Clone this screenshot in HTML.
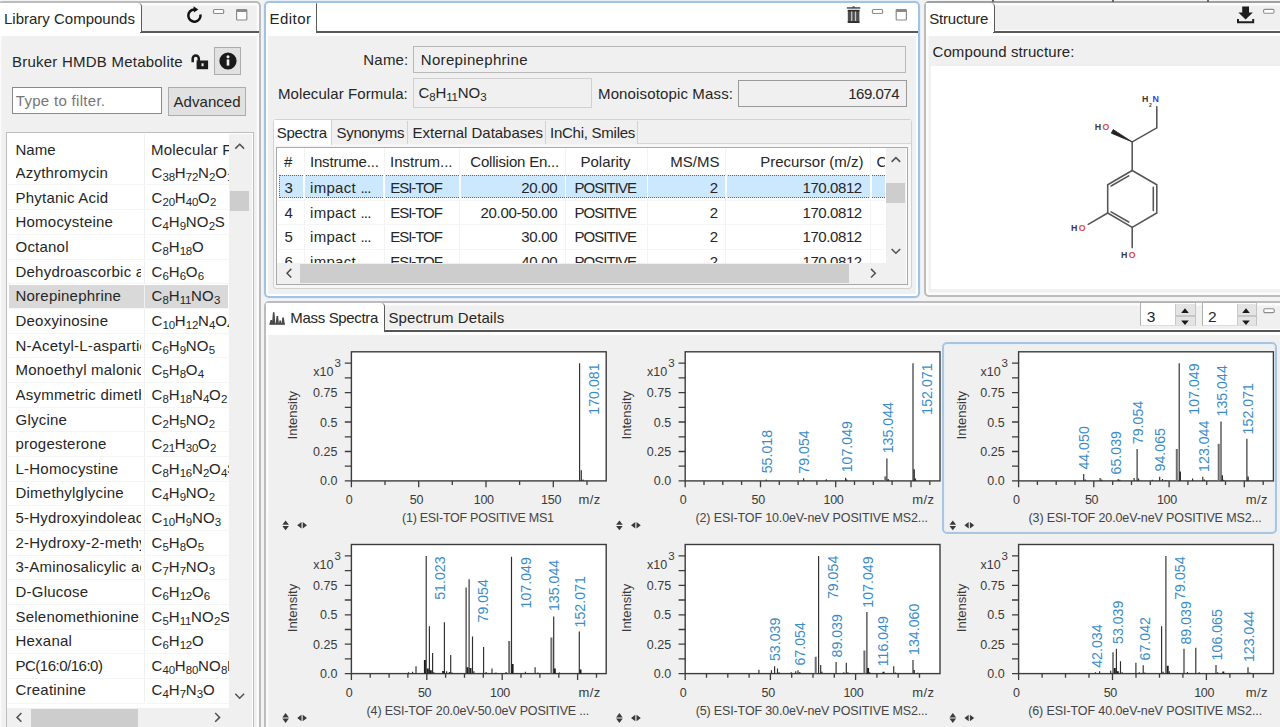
<!DOCTYPE html>
<html lang="en"><head><meta charset="utf-8"><title>Library Editor</title>
<style>
*{box-sizing:border-box;margin:0;padding:0}
html,body{width:1280px;height:727px;overflow:hidden;background:#f3f3f3}
body{position:relative;font-family:"Liberation Sans",sans-serif;font-size:15px;color:#262626;line-height:1}
.a{position:absolute}
.t{position:absolute;white-space:nowrap;line-height:18px;height:18px}
.s{font-size:11.5px;position:relative;top:3px;letter-spacing:-0.3px}
svg{position:absolute;overflow:visible}
svg text{font-family:"Liberation Sans",sans-serif}
</style></head>
<body>
<!-- left -->
<div class="a" style="left:-3px;top:0.8px;width:264.2px;height:740px;border:2.1px solid #bcbcbc;border-radius:5px;background:#f0f0f0;box-shadow:inset 0 0 0 2.4px #fbfbfb"></div>
<div class="a" style="left:0px;top:30.5px;width:259.1px;height:2px;background:#5a5a5a"></div>
<div class="a" style="left:0px;top:32.5px;width:259.1px;height:3px;background:#fff"></div>
<div class="a" style="left:-2px;top:2.5px;width:143.5px;height:29.6px;background:#fff;border-right:1.6px solid #5a5a5a;border-top-right-radius:4px"></div>
<div class="a" style="left:-2px;top:30.5px;width:141.9px;height:5px;background:#fff"></div>
<div class="t" style="left:4px;top:9.5px;">Library Compounds</div>
<svg style="left:184px;top:4px" width="70" height="24" viewBox="0 0 70 24"><path d="M16.4 10.4 A6.1 6.1 0 1 1 10.4 5.5" fill="none" stroke="#111" stroke-width="2.5"/><path d="M9.5 2.3 L14.3 5.5 L9.9 8.4 Z" fill="#111"/><rect x="29.5" y="5.5" width="10.2" height="4" rx="1.3" fill="#fff" stroke="#8a8a8a" stroke-width="1.2"/><rect x="52.6" y="5.6" width="10.2" height="10.4" rx="0.8" fill="#fff" stroke="#8a8a8a" stroke-width="1.2"/><rect x="52.6" y="5.6" width="10.2" height="2.4" fill="#8a8a8a"/></svg>
<div class="t" style="left:12px;top:52.5px;letter-spacing:0.23px">Bruker HMDB Metabolite</div>
<svg style="left:190px;top:53px" width="20" height="17" viewBox="0 0 20 17"><path d="M2.7 9.2 V5.5 A3.05 3.05 0 0 1 8.8 5.5 V8.6" fill="none" stroke="#1c1c1c" stroke-width="2.5"/><rect x="6.6" y="7.5" width="11.5" height="8.7" fill="#1c1c1c"/><rect x="11.5" y="10.3" width="2.1" height="2.9" fill="#e8e8e8"/></svg>
<div class="a" style="left:214px;top:47px;width:27px;height:27.5px;background:#e1e1e1;border:1px solid #adadad"></div>
<svg style="left:218.6px;top:52.2px" width="18" height="18" viewBox="0 0 18 18"><circle cx="9" cy="9" r="8.6" fill="#1a1a1a"/><rect x="7.7" y="7.4" width="2.6" height="6.2" fill="#f0f0f0"/><circle cx="9" cy="4.7" r="1.5" fill="#f0f0f0"/></svg>
<div class="a" style="left:11.5px;top:86.5px;width:150.5px;height:27px;background:#fff;border:1.4px solid #8a8a8a"></div>
<div class="t" style="left:15.8px;top:91.5px;color:#767676;letter-spacing:0.3px">Type to filter.</div>
<div class="a" style="left:168px;top:87.4px;width:78px;height:28.9px;background:#e1e1e1;border:1px solid #adadad"></div>
<div class="t" style="left:173.5px;top:93px;letter-spacing:0.05px">Advanced</div>
<div class="a" style="left:6px;top:132.3px;width:247.5px;height:600.7px;background:#fff;border:1.3px solid #bdbdbd"></div>
<div class="a" style="left:228.6px;top:133.6px;width:23.6px;height:574.7px;background:#f0f0f0"></div>
<div class="a" style="left:7.3px;top:708.3px;width:245px;height:20px;background:#f0f0f0"></div>
<div class="a" style="left:144px;top:133.6px;width:1px;height:569.7px;background:#f0f0f0"></div>
<div class="t" style="left:15.5px;top:140.5px;">Name</div>
<div class="t" style="left:151px;top:140.5px;width:77.5px;overflow:hidden;letter-spacing:0.2px">Molecular Formula</div>
<div class="a" style="left:8.3px;top:184.48px;width:221px;height:1px;background:#f5f5f5"></div>
<div class="t" style="left:15.5px;top:164.2px;width:125px;overflow:hidden;letter-spacing:0.22px">Azythromycin</div>
<div class="t" style="left:151.5px;top:164.2px;width:77px;overflow:hidden;letter-spacing:0.2px">C<span class="s">38</span>H<span class="s">72</span>N<span class="s">2</span>O<span class="s">12</span></div>
<div class="a" style="left:8.3px;top:209.16px;width:221px;height:1px;background:#f5f5f5"></div>
<div class="t" style="left:15.5px;top:188.83px;width:125px;overflow:hidden;letter-spacing:0.22px">Phytanic Acid</div>
<div class="t" style="left:151.5px;top:188.83px;width:77px;overflow:hidden;letter-spacing:0.2px">C<span class="s">20</span>H<span class="s">40</span>O<span class="s">2</span></div>
<div class="a" style="left:8.3px;top:233.84px;width:221px;height:1px;background:#f5f5f5"></div>
<div class="t" style="left:15.5px;top:213.46px;width:125px;overflow:hidden;letter-spacing:0.22px">Homocysteine</div>
<div class="t" style="left:151.5px;top:213.46px;width:77px;overflow:hidden;letter-spacing:0.2px">C<span class="s">4</span>H<span class="s">9</span>NO<span class="s">2</span>S</div>
<div class="a" style="left:8.3px;top:258.52px;width:221px;height:1px;background:#f5f5f5"></div>
<div class="t" style="left:15.5px;top:238.09px;width:125px;overflow:hidden;letter-spacing:0.22px">Octanol</div>
<div class="t" style="left:151.5px;top:238.09px;width:77px;overflow:hidden;letter-spacing:0.2px">C<span class="s">8</span>H<span class="s">18</span>O</div>
<div class="a" style="left:8.3px;top:283.2px;width:221px;height:1px;background:#f5f5f5"></div>
<div class="t" style="left:15.5px;top:262.72px;width:125px;overflow:hidden;letter-spacing:0.22px">Dehydroascorbic acid</div>
<div class="t" style="left:151.5px;top:262.72px;width:77px;overflow:hidden;letter-spacing:0.2px">C<span class="s">6</span>H<span class="s">6</span>O<span class="s">6</span></div>
<div class="a" style="left:9px;top:285.2px;width:135px;height:22.6px;background:#d9d9d9"></div>
<div class="a" style="left:145px;top:285.2px;width:83.4px;height:22.6px;background:#d9d9d9"></div>
<div class="a" style="left:8.3px;top:307.88px;width:221px;height:1px;background:#f5f5f5"></div>
<div class="t" style="left:15.5px;top:287.35px;width:125px;overflow:hidden;letter-spacing:0.22px">Norepinephrine</div>
<div class="t" style="left:151.5px;top:287.35px;width:77px;overflow:hidden;letter-spacing:0.2px">C<span class="s">8</span>H<span class="s">11</span>NO<span class="s">3</span></div>
<div class="a" style="left:8.3px;top:332.56px;width:221px;height:1px;background:#f5f5f5"></div>
<div class="t" style="left:15.5px;top:311.98px;width:125px;overflow:hidden;letter-spacing:0.22px">Deoxyinosine</div>
<div class="t" style="left:151.5px;top:311.98px;width:77px;overflow:hidden;letter-spacing:0.2px">C<span class="s">10</span>H<span class="s">12</span>N<span class="s">4</span>O<span class="s">4</span></div>
<div class="a" style="left:8.3px;top:357.24px;width:221px;height:1px;background:#f5f5f5"></div>
<div class="t" style="left:15.5px;top:336.61px;width:125px;overflow:hidden;letter-spacing:0.22px">N-Acetyl-L-aspartic acid</div>
<div class="t" style="left:151.5px;top:336.61px;width:77px;overflow:hidden;letter-spacing:0.2px">C<span class="s">6</span>H<span class="s">9</span>NO<span class="s">5</span></div>
<div class="a" style="left:8.3px;top:381.92px;width:221px;height:1px;background:#f5f5f5"></div>
<div class="t" style="left:15.5px;top:361.24px;width:125px;overflow:hidden;letter-spacing:0.22px">Monoethyl malonic acid</div>
<div class="t" style="left:151.5px;top:361.24px;width:77px;overflow:hidden;letter-spacing:0.2px">C<span class="s">5</span>H<span class="s">8</span>O<span class="s">4</span></div>
<div class="a" style="left:8.3px;top:406.6px;width:221px;height:1px;background:#f5f5f5"></div>
<div class="t" style="left:15.5px;top:385.87px;width:125px;overflow:hidden;letter-spacing:0.22px">Asymmetric dimethylarginine</div>
<div class="t" style="left:151.5px;top:385.87px;width:77px;overflow:hidden;letter-spacing:0.2px">C<span class="s">8</span>H<span class="s">18</span>N<span class="s">4</span>O<span class="s">2</span></div>
<div class="a" style="left:8.3px;top:431.28px;width:221px;height:1px;background:#f5f5f5"></div>
<div class="t" style="left:15.5px;top:410.5px;width:125px;overflow:hidden;letter-spacing:0.22px">Glycine</div>
<div class="t" style="left:151.5px;top:410.5px;width:77px;overflow:hidden;letter-spacing:0.2px">C<span class="s">2</span>H<span class="s">5</span>NO<span class="s">2</span></div>
<div class="a" style="left:8.3px;top:455.96px;width:221px;height:1px;background:#f5f5f5"></div>
<div class="t" style="left:15.5px;top:435.13px;width:125px;overflow:hidden;letter-spacing:0.22px">progesterone</div>
<div class="t" style="left:151.5px;top:435.13px;width:77px;overflow:hidden;letter-spacing:0.2px">C<span class="s">21</span>H<span class="s">30</span>O<span class="s">2</span></div>
<div class="a" style="left:8.3px;top:480.64px;width:221px;height:1px;background:#f5f5f5"></div>
<div class="t" style="left:15.5px;top:459.76px;width:125px;overflow:hidden;letter-spacing:0.22px">L-Homocystine</div>
<div class="t" style="left:151.5px;top:459.76px;width:77px;overflow:hidden;letter-spacing:0.2px">C<span class="s">8</span>H<span class="s">16</span>N<span class="s">2</span>O<span class="s">4</span>S<span class="s">2</span></div>
<div class="a" style="left:8.3px;top:505.32px;width:221px;height:1px;background:#f5f5f5"></div>
<div class="t" style="left:15.5px;top:484.39px;width:125px;overflow:hidden;letter-spacing:0.22px">Dimethylglycine</div>
<div class="t" style="left:151.5px;top:484.39px;width:77px;overflow:hidden;letter-spacing:0.2px">C<span class="s">4</span>H<span class="s">9</span>NO<span class="s">2</span></div>
<div class="a" style="left:8.3px;top:530px;width:221px;height:1px;background:#f5f5f5"></div>
<div class="t" style="left:15.5px;top:509.02px;width:125px;overflow:hidden;letter-spacing:0.22px">5-Hydroxyindoleacetic acid</div>
<div class="t" style="left:151.5px;top:509.02px;width:77px;overflow:hidden;letter-spacing:0.2px">C<span class="s">10</span>H<span class="s">9</span>NO<span class="s">3</span></div>
<div class="a" style="left:8.3px;top:554.68px;width:221px;height:1px;background:#f5f5f5"></div>
<div class="t" style="left:15.5px;top:533.65px;width:125px;overflow:hidden;letter-spacing:0.22px">2-Hydroxy-2-methylbutyric acid</div>
<div class="t" style="left:151.5px;top:533.65px;width:77px;overflow:hidden;letter-spacing:0.2px">C<span class="s">5</span>H<span class="s">8</span>O<span class="s">5</span></div>
<div class="a" style="left:8.3px;top:579.36px;width:221px;height:1px;background:#f5f5f5"></div>
<div class="t" style="left:15.5px;top:558.28px;width:125px;overflow:hidden;letter-spacing:0.22px">3-Aminosalicylic acid</div>
<div class="t" style="left:151.5px;top:558.28px;width:77px;overflow:hidden;letter-spacing:0.2px">C<span class="s">7</span>H<span class="s">7</span>NO<span class="s">3</span></div>
<div class="a" style="left:8.3px;top:604.04px;width:221px;height:1px;background:#f5f5f5"></div>
<div class="t" style="left:15.5px;top:582.91px;width:125px;overflow:hidden;letter-spacing:0.22px">D-Glucose</div>
<div class="t" style="left:151.5px;top:582.91px;width:77px;overflow:hidden;letter-spacing:0.2px">C<span class="s">6</span>H<span class="s">12</span>O<span class="s">6</span></div>
<div class="a" style="left:8.3px;top:628.72px;width:221px;height:1px;background:#f5f5f5"></div>
<div class="t" style="left:15.5px;top:607.54px;width:125px;overflow:hidden;letter-spacing:0.22px">Selenomethionine</div>
<div class="t" style="left:151.5px;top:607.54px;width:77px;overflow:hidden;letter-spacing:0.2px">C<span class="s">5</span>H<span class="s">11</span>NO<span class="s">2</span>Se</div>
<div class="a" style="left:8.3px;top:653.4px;width:221px;height:1px;background:#f5f5f5"></div>
<div class="t" style="left:15.5px;top:632.17px;width:125px;overflow:hidden;letter-spacing:0.22px">Hexanal</div>
<div class="t" style="left:151.5px;top:632.17px;width:77px;overflow:hidden;letter-spacing:0.2px">C<span class="s">6</span>H<span class="s">12</span>O</div>
<div class="a" style="left:8.3px;top:678.08px;width:221px;height:1px;background:#f5f5f5"></div>
<div class="t" style="left:15.5px;top:656.8px;width:125px;overflow:hidden;letter-spacing:-0.5px">PC(16:0/16:0)</div>
<div class="t" style="left:151.5px;top:656.8px;width:77px;overflow:hidden;letter-spacing:0.2px">C<span class="s">40</span>H<span class="s">80</span>NO<span class="s">8</span>P</div>
<div class="a" style="left:8.3px;top:702.76px;width:221px;height:1px;background:#f5f5f5"></div>
<div class="t" style="left:15.5px;top:681.43px;width:125px;overflow:hidden;letter-spacing:0.22px">Creatinine</div>
<div class="t" style="left:151.5px;top:681.43px;width:77px;overflow:hidden;letter-spacing:0.2px">C<span class="s">4</span>H<span class="s">7</span>N<span class="s">3</span>O</div>
<div class="a" style="left:230.3px;top:190.5px;width:18.5px;height:20.5px;background:#cdcdcd"></div>
<div class="a" style="left:30.5px;top:709px;width:107.5px;height:20px;background:#cdcdcd"></div>
<svg style="left:0;top:0" width="260" height="727" viewBox="0 0 260 727"><path d="M235.3 148.6 L239.7 144.2 L244.1 148.6" fill="none" stroke="#505050" stroke-width="1.5"/><path d="M235.3 693.8 L239.7 698.2 L244.1 693.8" fill="none" stroke="#505050" stroke-width="1.5"/><path d="M21.4 713 L17 717.4 L21.4 721.8" fill="none" stroke="#505050" stroke-width="1.5"/><path d="M215.2 713 L219.6 717.4 L215.2 721.8" fill="none" stroke="#505050" stroke-width="1.5"/></svg>
<!-- editor -->
<div class="a" style="left:264px;top:0.7px;width:656.4px;height:297.3px;border:2.1px solid #a2c3e1;border-radius:5px;background:#fff;box-shadow:0 0 0 1px #e6eff8"></div>
<div class="a" style="left:268.4px;top:35.5px;width:647.6px;height:258px;background:#f0f0f0"></div>
<div class="a" style="left:316px;top:30.6px;width:602.3px;height:2px;background:#5a5a5a"></div>
<div class="a" style="left:315.5px;top:3.2px;width:1.6px;height:29.3px;background:#5a5a5a;border-top-right-radius:3px"></div>
<div class="t" style="left:269.5px;top:9.5px;letter-spacing:0.45px">Editor</div>
<svg style="left:845px;top:4px" width="66" height="22" viewBox="0 0 66 22"><rect x="1.9" y="3.3" width="13.4" height="1.3" fill="#333"/><path d="M6.9 3.4 Q8.6 1.2 10.3 3.4 Z" fill="#333"/><rect x="2.8" y="5.9" width="11.6" height="13" fill="#4e4e4e"/><rect x="2.8" y="5.9" width="11.6" height="1.6" fill="#2c2c2c"/><rect x="2.8" y="17.2" width="11.6" height="1.7" fill="#2c2c2c"/><path d="M6.7 7.6 V17.1 M10.5 7.6 V17.1" stroke="#c6c6c6" stroke-width="1.3"/><rect x="27.4" y="5.5" width="10.2" height="4" rx="1.3" fill="#fff" stroke="#8a8a8a" stroke-width="1.2"/><rect x="51.2" y="5.6" width="10.2" height="10.4" rx="0.8" fill="#fff" stroke="#8a8a8a" stroke-width="1.2"/><rect x="51.2" y="5.6" width="10.2" height="2.4" fill="#8a8a8a"/></svg>
<div class="t" style="right:871.5px;top:51px;letter-spacing:0.2px">Name:</div>
<div class="a" style="left:413px;top:45.5px;width:493px;height:27px;background:#f0f0f0;border:1.5px solid #b8b8b8"></div>
<div class="t" style="left:420.8px;top:51px;letter-spacing:0.32px">Norepinephrine</div>
<div class="t" style="left:278px;top:85px;letter-spacing:0.08px">Molecular Formula:</div>
<div class="a" style="left:413px;top:78px;width:178.5px;height:30px;background:#f0f0f0;border:1.4px solid #d0d0d0"></div>
<div class="t" style="left:418.5px;top:84px;">C<span class="s">8</span>H<span class="s">11</span>NO<span class="s">3</span></div>
<div class="t" style="left:598px;top:85px;letter-spacing:0.14px">Monoisotopic Mass:</div>
<div class="a" style="left:738px;top:79.5px;width:168.5px;height:27px;background:#f0f0f0;border:1.4px solid #9a9a9a"></div>
<div class="t" style="right:381px;top:85px;letter-spacing:-0.5px">169.074</div>
<div class="a" style="left:272.5px;top:118.5px;width:639.5px;height:170.5px;border:1.2px solid #d2d2d2;background:#f7f7f7;border-radius:3px"></div>
<div class="a" style="left:273.5px;top:119.5px;width:637.5px;height:24.5px;background:#f0f0f0;border-bottom:1.2px solid #d6d6d6"></div>
<div class="a" style="left:273.5px;top:119.5px;width:58px;height:25.5px;background:#fff;border-right:1.2px solid #d2d2d2"></div>
<div class="t" style="left:276.7px;top:123.5px;letter-spacing:-0.22px">Spectra</div>
<div class="a" style="left:331.5px;top:120.5px;width:76px;height:23.5px;background:#f0f0f0;border-right:1.2px solid #d2d2d2"></div>
<div class="t" style="left:336.5px;top:123.5px;letter-spacing:-0.3px">Synonyms</div>
<div class="a" style="left:407.5px;top:120.5px;width:138.5px;height:23.5px;background:#f0f0f0;border-right:1.2px solid #d2d2d2"></div>
<div class="t" style="left:412.6px;top:123.5px;letter-spacing:-0.03px">External Databases</div>
<div class="a" style="left:546px;top:120.5px;width:92px;height:23.5px;background:#f0f0f0;border-right:1.2px solid #d2d2d2"></div>
<div class="t" style="left:550px;top:123.5px;letter-spacing:-0.25px">InChi, Smiles</div>
<div class="a" style="left:276px;top:146.5px;width:631.5px;height:138.4px;background:#fff;border:1.2px solid #a9a9a9"></div>
<div class="a" style="left:303.5px;top:148px;width:1px;height:115px;background:#f3f3f3"></div>
<div class="a" style="left:383.5px;top:148px;width:1px;height:115px;background:#f3f3f3"></div>
<div class="a" style="left:459.3px;top:148px;width:1px;height:115px;background:#f3f3f3"></div>
<div class="a" style="left:565px;top:148px;width:1px;height:115px;background:#f3f3f3"></div>
<div class="a" style="left:647px;top:148px;width:1px;height:115px;background:#f3f3f3"></div>
<div class="a" style="left:725.4px;top:148px;width:1px;height:115px;background:#f3f3f3"></div>
<div class="a" style="left:870.4px;top:148px;width:1px;height:115px;background:#f3f3f3"></div>
<div class="t" style="left:284px;top:152.5px;">#</div>
<div class="t" style="left:310px;top:152.5px;letter-spacing:-0.2px">Instrume...</div>
<div class="t" style="left:390px;top:152.5px;">Instrum...</div>
<div class="t" style="right:721px;top:152.5px;letter-spacing:-0.2px">Collision En...</div>
<div class="t" style="left:580.5px;top:152.5px;">Polarity</div>
<div class="t" style="right:560.5px;top:152.5px;">MS/MS</div>
<div class="t" style="right:416.5px;top:152.5px;">Precursor (m/z)</div>
<div class="t" style="left:876.5px;top:152.5px;width:8.5px;overflow:hidden">C</div>
<div class="a" style="left:279px;top:175.3px;width:606px;height:22.4px;background:#cce8ff;border-top:1.2px dotted #4d6a86;border-bottom:1.2px dotted #4d6a86"></div>
<div class="a" style="left:279px;top:175.3px;width:1.2px;height:22.4px;border-left:1.2px dotted #4d6a86"></div>
<div class="a" style="left:303.1px;top:174.5px;width:1.8px;height:24px;background:#fafcff"></div>
<div class="a" style="left:383.1px;top:174.5px;width:1.8px;height:24px;background:#fafcff"></div>
<div class="a" style="left:458.9px;top:174.5px;width:1.8px;height:24px;background:#fafcff"></div>
<div class="a" style="left:564.6px;top:174.5px;width:1.8px;height:24px;background:#fafcff"></div>
<div class="a" style="left:646.6px;top:174.5px;width:1.8px;height:24px;background:#fafcff"></div>
<div class="a" style="left:725px;top:174.5px;width:1.8px;height:24px;background:#fafcff"></div>
<div class="a" style="left:870px;top:174.5px;width:1.8px;height:24px;background:#fafcff"></div>
<div class="t" style="left:284.5px;top:178.5px;">3</div>
<div class="t" style="left:310px;top:178.5px;letter-spacing:0.3px">impact <span style="letter-spacing:-0.8px">...</span></div>
<div class="t" style="left:390.3px;top:178.5px;letter-spacing:-1.05px">ESI-TOF</div>
<div class="t" style="right:722.7px;top:178.5px;letter-spacing:-0.3px">20.00</div>
<div class="t" style="left:574.5px;top:178.5px;letter-spacing:-0.95px">POSITIVE</div>
<div class="t" style="right:562px;top:178.5px;">2</div>
<div class="t" style="right:418.2px;top:178.5px;letter-spacing:-0.4px">170.0812</div>
<div class="a" style="left:278px;top:199.5px;width:607px;height:1px;background:#f5f5f5"></div>
<div class="t" style="left:284.5px;top:203.5px;">4</div>
<div class="t" style="left:310px;top:203.5px;letter-spacing:0.3px">impact <span style="letter-spacing:-0.8px">...</span></div>
<div class="t" style="left:390.3px;top:203.5px;letter-spacing:-1.05px">ESI-TOF</div>
<div class="t" style="right:722.7px;top:203.5px;letter-spacing:-0.3px">20.00-50.00</div>
<div class="t" style="left:574.5px;top:203.5px;letter-spacing:-0.95px">POSITIVE</div>
<div class="t" style="right:562px;top:203.5px;">2</div>
<div class="t" style="right:418.2px;top:203.5px;letter-spacing:-0.4px">170.0812</div>
<div class="a" style="left:278px;top:224px;width:607px;height:1px;background:#f5f5f5"></div>
<div class="t" style="left:284.5px;top:228px;">5</div>
<div class="t" style="left:310px;top:228px;letter-spacing:0.3px">impact <span style="letter-spacing:-0.8px">...</span></div>
<div class="t" style="left:390.3px;top:228px;letter-spacing:-1.05px">ESI-TOF</div>
<div class="t" style="right:722.7px;top:228px;letter-spacing:-0.3px">30.00</div>
<div class="t" style="left:574.5px;top:228px;letter-spacing:-0.95px">POSITIVE</div>
<div class="t" style="right:562px;top:228px;">2</div>
<div class="t" style="right:418.2px;top:228px;letter-spacing:-0.4px">170.0812</div>
<div class="a" style="left:278px;top:249px;width:607px;height:1px;background:#f5f5f5"></div>
<div class="t" style="left:284.5px;top:253px;">6</div>
<div class="t" style="left:310px;top:253px;letter-spacing:0.3px">impact <span style="letter-spacing:-0.8px">...</span></div>
<div class="t" style="left:390.3px;top:253px;letter-spacing:-1.05px">ESI-TOF</div>
<div class="t" style="right:722.7px;top:253px;letter-spacing:-0.3px">40.00</div>
<div class="t" style="left:574.5px;top:253px;letter-spacing:-0.95px">POSITIVE</div>
<div class="t" style="right:562px;top:253px;">2</div>
<div class="t" style="right:418.2px;top:253px;letter-spacing:-0.4px">170.0812</div>
<div class="a" style="left:885.5px;top:147.7px;width:20.8px;height:115px;background:#f0f0f0"></div>
<div class="a" style="left:886.4px;top:182.5px;width:18.7px;height:20.4px;background:#cdcdcd"></div>
<div class="a" style="left:277.2px;top:262.7px;width:629.1px;height:21px;background:#f0f0f0"></div>
<div class="a" style="left:299.5px;top:263.5px;width:549px;height:19.5px;background:#cdcdcd"></div>
<svg style="left:0;top:0" width="1280" height="300" viewBox="0 0 1280 300"><path d="M891.6 161.9 L895.9 157.6 L900.2 161.9" fill="none" stroke="#505050" stroke-width="1.5"/><path d="M891.6 249 L895.9 253.3 L900.2 249" fill="none" stroke="#505050" stroke-width="1.5"/><path d="M291.3 268.9 L287 273.2 L291.3 277.5" fill="none" stroke="#505050" stroke-width="1.5"/><path d="M871 268.9 L875.3 273.2 L871 277.5" fill="none" stroke="#505050" stroke-width="1.5"/></svg>
<!-- structure -->
<div class="a" style="left:923.8px;top:1.1px;width:366px;height:296px;border:2.1px solid #bcbcbc;border-top-color:#a0a0a0;border-radius:5px;background:#f0f0f0;box-shadow:inset 0 0 0 2.4px #fbfbfb"></div>
<div class="a" style="left:925.9px;top:29.5px;width:356px;height:1px;background:#fff"></div>
<div class="a" style="left:925.9px;top:30.5px;width:356px;height:2px;background:#5a5a5a"></div>
<div class="a" style="left:925.9px;top:32.5px;width:356px;height:3px;background:#fff"></div>
<div class="a" style="left:925.9px;top:3.2px;width:69.1px;height:29px;background:#fff;border-right:1.6px solid #5a5a5a;border-top-right-radius:4px"></div>
<div class="a" style="left:925.9px;top:30.5px;width:67.5px;height:5px;background:#fff"></div>
<div class="a" style="left:991.5px;top:0px;width:2px;height:1.6px;background:#666"></div>
<div class="a" style="left:1111.8px;top:0px;width:2px;height:1.6px;background:#666"></div>
<div class="a" style="left:1206.8px;top:0px;width:2px;height:1.6px;background:#666"></div>
<div class="t" style="left:929.3px;top:9.5px;letter-spacing:-0.22px">Structure</div>
<svg style="left:1234px;top:4px" width="46" height="22" viewBox="0 0 46 22"><path d="M8.2 2.4 H15 V8.6 H18.8 L11.6 15.4 L4.4 8.6 H8.2 Z" fill="#1e1e1e"/><path d="M3 15 V19.2 H20.2 V15 H18.2 V17.2 H5 V15 Z" fill="#1e1e1e"/><rect x="29.6" y="5.4" width="10.4" height="3.8" rx="1.2" fill="#fff" stroke="#8c8c8c" stroke-width="1.1"/></svg>
<div class="t" style="left:932.5px;top:42.5px;letter-spacing:0.1px">Compound structure:</div>
<div class="a" style="left:930.5px;top:66.3px;width:352px;height:222.3px;background:#fff"></div>
<svg style="left:0;top:0" width="1280" height="300" viewBox="0 0 1280 300"><g fill="none" stroke="#555" stroke-width="1.55" stroke-linecap="round"><path d="M1156.8 106.8 V127.8 L1132.2 141.9 V170.5"/><path d="M1132.2 170.5 L1156.8 184.8 V213 L1132.2 227.3 L1107.7 213 V184.8 Z"/><path d="M1128.7 175.8 L1111.1 186 M1153.3 187.2 V210.6 M1111.1 211.8 L1128.7 222"/><path d="M1107.7 213 L1088.2 224.3 M1132.2 227.3 V247.6"/></g><path d="M1132.2 141.9 L1113.2 129.6 L1111.3 133.2 Z" fill="#222" stroke="#222" stroke-width="0.8" stroke-linejoin="round"/><g font-size="8.8" font-weight="bold" text-anchor="middle"><text x="1145.1" y="102" fill="#3a3a3a">H</text><text x="1150.3" y="106.6" font-size="5" fill="#3a3a3a">2</text><text x="1155.6" y="102" fill="#3b3be6">N</text><text x="1098" y="130.3" fill="#3a3a3a">H</text><text x="1105.9" y="130.3" fill="#e24545">O</text><text x="1074.2" y="230.7" fill="#3a3a3a">H</text><text x="1082.1" y="230.7" fill="#e24545">O</text><text x="1124.2" y="258" fill="#3a3a3a">H</text><text x="1132.1" y="258" fill="#e24545">O</text></g></svg>
<!-- spectra -->
<div class="a" style="left:264.2px;top:300.5px;width:1026px;height:440px;border:2.1px solid #bcbcbc;border-radius:5px;background:#f0f0f0;box-shadow:inset 0 0 0 2.4px #fbfbfb"></div>
<div class="a" style="left:266.3px;top:329.3px;width:1016px;height:1px;background:#fff"></div>
<div class="a" style="left:266.3px;top:330px;width:1016px;height:2px;background:#555"></div>
<div class="a" style="left:266.3px;top:332px;width:1016px;height:3.1px;background:#fff"></div>
<div class="a" style="left:266.3px;top:302.6px;width:118.6px;height:29.4px;background:#fff;border-right:1.6px solid #5a5a5a;border-top-right-radius:4px"></div>
<div class="a" style="left:266.3px;top:330px;width:117px;height:5.1px;background:#fff"></div>
<svg style="left:269px;top:311px" width="17" height="15" viewBox="0 0 17 15"><path d="M0.5 13.4L1.4 9.0L3.0 9.0L3.9 13.4ZM3.0 13.4L3.9 1.2L5.5 1.2L6.4 13.4ZM6.6 13.4L7.5 5.0L9.1 5.0L10.0 13.4ZM9.9 13.4L10.4 9.6L12.0 9.6L12.5 13.4ZM12.4 13.4L13.3 6.5L14.9 6.5L15.8 13.4Z" fill="#4a4a4a"/><path d="M0.6 13H16" stroke="#4a4a4a" stroke-width="1.3"/></svg>
<div class="t" style="left:290.3px;top:308.9px;letter-spacing:-0.33px">Mass Spectra</div>
<div class="t" style="left:388.5px;top:308.9px;letter-spacing:0.1px">Spectrum Details</div>
<div class="a" style="left:1140.3px;top:302.2px;width:55.6px;height:23.8px;background:#fff;border:1.5px solid #b0b0b0;border-bottom:1px solid #dcdcdc;border-right-color:#c4c4c4"></div>
<div class="a" style="left:1175.3px;top:303.5px;width:19.4px;height:21.2px;background:#e4e4e4;border-left:1px solid #c9c9c9"></div>
<div class="a" style="left:1175.3px;top:315.4px;width:19.4px;height:1.2px;background:#c6c6c6"></div>
<div class="t" style="left:1146.7px;top:308.2px;font-size:15.5px">3</div>
<svg style="left:1178.6px;top:305px" width="12" height="21" viewBox="0 0 12 21"><path d="M2.2 7.9L6 3.3L9.8 7.9ZM2.2 15.4L6 20L9.8 15.4Z" fill="#1a1a1a"/></svg>
<div class="a" style="left:1201.5px;top:302.2px;width:55.6px;height:23.8px;background:#fff;border:1.5px solid #b0b0b0;border-bottom:1px solid #dcdcdc;border-right-color:#c4c4c4"></div>
<div class="a" style="left:1236.5px;top:303.5px;width:19.4px;height:21.2px;background:#e4e4e4;border-left:1px solid #c9c9c9"></div>
<div class="a" style="left:1236.5px;top:315.4px;width:19.4px;height:1.2px;background:#c6c6c6"></div>
<div class="t" style="left:1207.9px;top:308.2px;font-size:15.5px">2</div>
<svg style="left:1239.8px;top:305px" width="12" height="21" viewBox="0 0 12 21"><path d="M2.2 7.9L6 3.3L9.8 7.9ZM2.2 15.4L6 20L9.8 15.4Z" fill="#1a1a1a"/></svg>
<svg style="left:1262px;top:306px" width="14" height="10" viewBox="0 0 14 10"><rect x="1.8" y="2.8" width="10.4" height="3.8" rx="1.2" fill="#fff" stroke="#8c8c8c" stroke-width="1.1"/></svg>
<div class="a" style="left:942px;top:342.1px;width:334.6px;height:192.2px;border:2px solid #a8c5e2;border-radius:5px;background:#f0f0f0;box-shadow:inset 0 0 0 1.2px #e6eff8"></div>
<svg style="left:0;top:0" width="1280" height="727" viewBox="0 0 1280 727">
<g><rect x="351.4" y="351.8" width="254.8" height="129.1" fill="#fff" stroke="#3c3c3c" stroke-width="1.4"/>
<path d="M344.8 363.2H351.4M344.8 377.9H351.4M344.8 392.6H351.4M344.8 407.3H351.4M344.8 422.0H351.4M344.8 436.8H351.4M344.8 451.5H351.4M344.8 466.2H351.4M344.8 480.9H351.4M351.4 480.9V487.3M385.0 480.9V485.1M418.7 480.9V487.3M452.3 480.9V485.1M486.0 480.9V487.3M519.6 480.9V485.1M553.3 480.9V487.3M587.0 480.9V485.1" stroke="#3c3c3c" stroke-width="1.3" fill="none"/>
<text x="337.4" y="397.1" font-size="12.5" fill="#3a3a3a" text-anchor="end">0.75</text>
<text x="337.4" y="426.5" font-size="12.5" fill="#3a3a3a" text-anchor="end">0.5</text>
<text x="337.4" y="456.0" font-size="12.5" fill="#3a3a3a" text-anchor="end">0.25</text>
<text x="337.4" y="485.4" font-size="12.5" fill="#3a3a3a" text-anchor="end">0.0</text>
<text x="333.4" y="376.4" font-size="12.5" fill="#3a3a3a" text-anchor="end">x10</text>
<text x="334.4" y="367.4" font-size="11.5" fill="#3a3a3a" text-anchor="start">3</text>
<text x="297.0" y="415.2" font-size="13" fill="#3a3a3a" text-anchor="middle" transform="rotate(-90 297.0 415.2)">Intensity</text>
<text x="349.2" y="504.4" font-size="12.5" fill="#3a3a3a" text-anchor="middle" letter-spacing="-0.3">0</text>
<text x="416.5" y="504.4" font-size="12.5" fill="#3a3a3a" text-anchor="middle" letter-spacing="-0.3">50</text>
<text x="483.8" y="504.4" font-size="12.5" fill="#3a3a3a" text-anchor="middle" letter-spacing="-0.3">100</text>
<text x="551.1" y="504.4" font-size="12.5" fill="#3a3a3a" text-anchor="middle" letter-spacing="-0.3">150</text>
<text x="589.6" y="504.4" font-size="13" fill="#3a3a3a" text-anchor="middle" letter-spacing="0.4">m/z</text>
<text x="477.9" y="522.1" font-size="12.5" fill="#444" text-anchor="middle" letter-spacing="-0.27">(1) ESI-TOF POSITIVE MS1</text>
<path d="M579.6 480.9V363.2M581.3 480.9V470.3M583.0 480.9V479.5" stroke="#2e2e2e" stroke-width="1.15" fill="none"/>
<text x="598.8" y="363.4" font-size="14.2" fill="#3a8cc9" text-anchor="end" transform="rotate(-90 598.8 363.4)">170.081</text>
<path d="M282.3 524.7l3.3 -4.3l3.3 4.3zM282.3 525.9l3.3 4.3l3.3 -4.3z" fill="#3a3a3a"/>
<path d="M301.5 522.0l-4.3 3.3l4.3 3.3zM302.7 522.0l4.3 3.3l-4.3 3.3z" fill="#3a3a3a"/></g>
<g><rect x="685.2" y="351.8" width="254.8" height="129.1" fill="#fff" stroke="#3c3c3c" stroke-width="1.4"/>
<path d="M678.6 363.2H685.2M678.6 377.9H685.2M678.6 392.6H685.2M678.6 407.3H685.2M678.6 422.0H685.2M678.6 436.8H685.2M678.6 451.5H685.2M678.6 466.2H685.2M678.6 480.9H685.2M685.2 480.9V487.3M704.0 480.9V485.1M722.8 480.9V485.1M741.6 480.9V485.1M760.5 480.9V487.3M779.3 480.9V485.1M798.1 480.9V485.1M816.9 480.9V485.1M835.7 480.9V487.3M854.5 480.9V485.1M873.3 480.9V485.1M892.1 480.9V485.1M911.0 480.9V487.3M929.8 480.9V485.1" stroke="#3c3c3c" stroke-width="1.3" fill="none"/>
<text x="671.2" y="397.1" font-size="12.5" fill="#3a3a3a" text-anchor="end">0.75</text>
<text x="671.2" y="426.5" font-size="12.5" fill="#3a3a3a" text-anchor="end">0.5</text>
<text x="671.2" y="456.0" font-size="12.5" fill="#3a3a3a" text-anchor="end">0.25</text>
<text x="671.2" y="485.4" font-size="12.5" fill="#3a3a3a" text-anchor="end">0.0</text>
<text x="667.2" y="376.4" font-size="12.5" fill="#3a3a3a" text-anchor="end">x10</text>
<text x="668.2" y="367.4" font-size="11.5" fill="#3a3a3a" text-anchor="start">3</text>
<text x="630.8" y="415.2" font-size="13" fill="#3a3a3a" text-anchor="middle" transform="rotate(-90 630.8 415.2)">Intensity</text>
<text x="683.0" y="504.4" font-size="12.5" fill="#3a3a3a" text-anchor="middle" letter-spacing="-0.3">0</text>
<text x="758.2" y="504.4" font-size="12.5" fill="#3a3a3a" text-anchor="middle" letter-spacing="-0.3">50</text>
<text x="833.5" y="504.4" font-size="12.5" fill="#3a3a3a" text-anchor="middle" letter-spacing="-0.3">100</text>
<text x="923.4" y="504.4" font-size="13" fill="#3a3a3a" text-anchor="middle" letter-spacing="0.4">m/z</text>
<text x="811.7" y="522.1" font-size="12.5" fill="#444" text-anchor="middle" letter-spacing="-0.13">(2) ESI-TOF 10.0eV-neV POSITIVE MS2...</text>
<path d="M885.3 480.9V476.4" stroke="#6e6e6e" stroke-width="2" fill="none"/>
<path d="M913.0 480.9V363.2M914.3 480.9V469.2M915.5 480.9V478.6M886.9 480.9V458.4M888.3 480.9V479.1M845.6 480.9V477.7M846.7 480.9V479.5M826.3 480.9V479.3M803.6 480.9V478.2M766.2 480.9V479.5" stroke="#2e2e2e" stroke-width="1.15" fill="none"/>
<text x="772.4" y="429.9" font-size="14.2" fill="#3a8cc9" text-anchor="end" transform="rotate(-90 772.4 429.9)">55.018</text>
<text x="809.2" y="430.3" font-size="14.2" fill="#3a8cc9" text-anchor="end" transform="rotate(-90 809.2 430.3)">79.054</text>
<text x="851.8" y="421.0" font-size="14.2" fill="#3a8cc9" text-anchor="end" transform="rotate(-90 851.8 421.0)">107.049</text>
<text x="892.7" y="402.0" font-size="14.2" fill="#3a8cc9" text-anchor="end" transform="rotate(-90 892.7 402.0)">135.044</text>
<text x="932.4" y="363.4" font-size="14.2" fill="#3a8cc9" text-anchor="end" transform="rotate(-90 932.4 363.4)">152.071</text>
<path d="M616.1 524.7l3.3 -4.3l3.3 4.3zM616.1 525.9l3.3 4.3l3.3 -4.3z" fill="#3a3a3a"/>
<path d="M635.3 522.0l-4.3 3.3l4.3 3.3zM636.5 522.0l4.3 3.3l-4.3 3.3z" fill="#3a3a3a"/></g>
<g><rect x="1018.6" y="351.8" width="254.8" height="129.1" fill="#fff" stroke="#3c3c3c" stroke-width="1.4"/>
<path d="M1012.0 363.2H1018.6M1012.0 377.9H1018.6M1012.0 392.6H1018.6M1012.0 407.3H1018.6M1012.0 422.0H1018.6M1012.0 436.8H1018.6M1012.0 451.5H1018.6M1012.0 466.2H1018.6M1012.0 480.9H1018.6M1018.6 480.9V487.3M1037.4 480.9V485.1M1056.2 480.9V485.1M1075.0 480.9V485.1M1093.8 480.9V487.3M1112.7 480.9V485.1M1131.5 480.9V485.1M1150.3 480.9V485.1M1169.1 480.9V487.3M1187.9 480.9V485.1M1206.7 480.9V485.1M1225.5 480.9V485.1M1244.3 480.9V487.3M1263.2 480.9V485.1" stroke="#3c3c3c" stroke-width="1.3" fill="none"/>
<text x="1004.6" y="397.1" font-size="12.5" fill="#3a3a3a" text-anchor="end">0.75</text>
<text x="1004.6" y="426.5" font-size="12.5" fill="#3a3a3a" text-anchor="end">0.5</text>
<text x="1004.6" y="456.0" font-size="12.5" fill="#3a3a3a" text-anchor="end">0.25</text>
<text x="1004.6" y="485.4" font-size="12.5" fill="#3a3a3a" text-anchor="end">0.0</text>
<text x="1000.6" y="376.4" font-size="12.5" fill="#3a3a3a" text-anchor="end">x10</text>
<text x="1001.6" y="367.4" font-size="11.5" fill="#3a3a3a" text-anchor="start">3</text>
<text x="966.4" y="415.2" font-size="13" fill="#3a3a3a" text-anchor="middle" transform="rotate(-90 966.4 415.2)">Intensity</text>
<text x="1016.4" y="504.4" font-size="12.5" fill="#3a3a3a" text-anchor="middle" letter-spacing="-0.3">0</text>
<text x="1091.6" y="504.4" font-size="12.5" fill="#3a3a3a" text-anchor="middle" letter-spacing="-0.3">50</text>
<text x="1166.9" y="504.4" font-size="12.5" fill="#3a3a3a" text-anchor="middle" letter-spacing="-0.3">100</text>
<text x="1256.8" y="504.4" font-size="13" fill="#3a3a3a" text-anchor="middle" letter-spacing="0.4">m/z</text>
<text x="1145.1" y="522.1" font-size="12.5" fill="#444" text-anchor="middle" letter-spacing="-0.11">(3) ESI-TOF 20.0eV-neV POSITIVE MS2...</text>
<path d="M1176.8 480.9V448.9M1218.7 480.9V443.7" stroke="#6e6e6e" stroke-width="2" fill="none"/>
<path d="M1083.7 480.9V474.1M1085.3 480.9V479.5M1100.1 480.9V478.0M1101.7 480.9V479.5M1118.2 480.9V478.9M1119.8 480.9V479.8M1134.1 480.9V478.0M1137.1 480.9V448.9M1138.6 480.9V478.6M1152.3 480.9V479.8M1159.7 480.9V476.8M1162.5 480.9V479.1M1165.9 480.9V480.0M1179.2 480.9V363.2M1180.4 480.9V471.4M1192.6 480.9V478.6M1202.8 480.9V476.8M1204.4 480.9V479.5M1221.0 480.9V421.6M1222.4 480.9V475.3M1223.7 480.9V479.8M1246.9 480.9V438.7M1248.2 480.9V476.4" stroke="#2e2e2e" stroke-width="1.15" fill="none"/>
<text x="1089.3" y="426.2" font-size="14.2" fill="#3a8cc9" text-anchor="end" transform="rotate(-90 1089.3 426.2)">44.050</text>
<text x="1121.1" y="431.0" font-size="14.2" fill="#3a8cc9" text-anchor="end" transform="rotate(-90 1121.1 431.0)">65.039</text>
<text x="1143.1" y="400.8" font-size="14.2" fill="#3a8cc9" text-anchor="end" transform="rotate(-90 1143.1 400.8)">79.054</text>
<text x="1165.3" y="428.0" font-size="14.2" fill="#3a8cc9" text-anchor="end" transform="rotate(-90 1165.3 428.0)">94.065</text>
<text x="1198.6" y="363.4" font-size="14.2" fill="#3a8cc9" text-anchor="end" transform="rotate(-90 1198.6 363.4)">107.049</text>
<text x="1208.8" y="420.6" font-size="14.2" fill="#3a8cc9" text-anchor="end" transform="rotate(-90 1208.8 420.6)">123.044</text>
<text x="1227.0" y="365.2" font-size="14.2" fill="#3a8cc9" text-anchor="end" transform="rotate(-90 1227.0 365.2)">135.044</text>
<text x="1252.6" y="383.1" font-size="14.2" fill="#3a8cc9" text-anchor="end" transform="rotate(-90 1252.6 383.1)">152.071</text>
<path d="M949.5 524.7l3.3 -4.3l3.3 4.3zM949.5 525.9l3.3 4.3l3.3 -4.3z" fill="#3a3a3a"/>
<path d="M968.7 522.0l-4.3 3.3l4.3 3.3zM969.9 522.0l4.3 3.3l-4.3 3.3z" fill="#3a3a3a"/></g>
<g><rect x="351.4" y="544.5" width="254.8" height="129.1" fill="#fff" stroke="#3c3c3c" stroke-width="1.4"/>
<path d="M344.8 555.9H351.4M344.8 570.6H351.4M344.8 585.3H351.4M344.8 600.0H351.4M344.8 614.8H351.4M344.8 629.5H351.4M344.8 644.2H351.4M344.8 658.9H351.4M344.8 673.6H351.4M351.4 673.6V680.0M370.2 673.6V677.8M389.1 673.6V677.8M407.9 673.6V677.8M426.8 673.6V680.0M445.6 673.6V677.8M464.5 673.6V677.8M483.3 673.6V677.8M502.2 673.6V680.0M521.0 673.6V677.8M539.9 673.6V677.8M558.8 673.6V677.8M577.6 673.6V680.0M596.5 673.6V677.8" stroke="#3c3c3c" stroke-width="1.3" fill="none"/>
<text x="337.4" y="589.8" font-size="12.5" fill="#3a3a3a" text-anchor="end">0.75</text>
<text x="337.4" y="619.2" font-size="12.5" fill="#3a3a3a" text-anchor="end">0.5</text>
<text x="337.4" y="648.7" font-size="12.5" fill="#3a3a3a" text-anchor="end">0.25</text>
<text x="337.4" y="678.1" font-size="12.5" fill="#3a3a3a" text-anchor="end">0.0</text>
<text x="333.4" y="569.1" font-size="12.5" fill="#3a3a3a" text-anchor="end">x10</text>
<text x="334.4" y="560.1" font-size="11.5" fill="#3a3a3a" text-anchor="start">3</text>
<text x="297.0" y="608.0" font-size="13" fill="#3a3a3a" text-anchor="middle" transform="rotate(-90 297.0 608.0)">Intensity</text>
<text x="349.2" y="697.1" font-size="12.5" fill="#3a3a3a" text-anchor="middle" letter-spacing="-0.3">0</text>
<text x="424.6" y="697.1" font-size="12.5" fill="#3a3a3a" text-anchor="middle" letter-spacing="-0.3">50</text>
<text x="500.0" y="697.1" font-size="12.5" fill="#3a3a3a" text-anchor="middle" letter-spacing="-0.3">100</text>
<text x="589.6" y="697.1" font-size="13" fill="#3a3a3a" text-anchor="middle" letter-spacing="0.4">m/z</text>
<text x="477.9" y="714.8" font-size="12.5" fill="#444" text-anchor="middle" letter-spacing="-0.17">(4) ESI-TOF 20.0eV-50.0eV POSITIVE ...</text>
<path d="M509.2 673.6V640.9M551.4 673.6V637.5" stroke="#6e6e6e" stroke-width="2" fill="none"/>
<path d="M408.5 673.6V672.2M412.6 673.6V671.8M416.0 673.6V666.2M426.2 673.6V555.9M429.4 673.6V626.2M432.6 673.6V652.9M433.9 673.6V672.2M444.4 673.6V622.2M446.6 673.6V671.3M450.7 673.6V654.9M449.4 673.6V672.0M452.1 673.6V672.5M466.1 673.6V587.5M469.1 673.6V579.3M472.5 673.6V636.4M473.9 673.6V671.3M483.6 673.6V647.0M486.1 673.6V672.0M492.0 673.6V668.4M495.9 673.6V672.5M506.1 673.6V672.0M511.5 673.6V556.8M525.4 673.6V671.8M535.1 673.6V667.3M537.8 673.6V672.5M553.7 673.6V616.6M559.4 673.6V672.5M579.3 673.6V631.4" stroke="#2e2e2e" stroke-width="1.15" fill="none"/>
<path d="M424.9 673.6V660.1M427.8 673.6V668.6M430.8 673.6V670.2M443.2 673.6V670.9M467.5 673.6V667.3M470.5 673.6V668.0M512.6 673.6V664.1M554.8 673.6V668.4M580.5 673.6V669.5" stroke="#1e1e1e" stroke-width="2" fill="none"/>
<text x="445.4" y="556.4" font-size="14.2" fill="#3a8cc9" text-anchor="end" transform="rotate(-90 445.4 556.4)">51.023</text>
<text x="488.5" y="579.1" font-size="14.2" fill="#3a8cc9" text-anchor="end" transform="rotate(-90 488.5 579.1)">79.054</text>
<text x="530.9" y="557.1" font-size="14.2" fill="#3a8cc9" text-anchor="end" transform="rotate(-90 530.9 557.1)">107.049</text>
<text x="558.8" y="559.8" font-size="14.2" fill="#3a8cc9" text-anchor="end" transform="rotate(-90 558.8 559.8)">135.044</text>
<text x="584.9" y="576.1" font-size="14.2" fill="#3a8cc9" text-anchor="end" transform="rotate(-90 584.9 576.1)">152.071</text>
<path d="M282.3 717.4l3.3 -4.3l3.3 4.3zM282.3 718.6l3.3 4.3l3.3 -4.3z" fill="#3a3a3a"/>
<path d="M301.5 714.7l-4.3 3.3l4.3 3.3zM302.7 714.7l4.3 3.3l-4.3 3.3z" fill="#3a3a3a"/></g>
<g><rect x="685.2" y="544.5" width="254.8" height="129.1" fill="#fff" stroke="#3c3c3c" stroke-width="1.4"/>
<path d="M678.6 555.9H685.2M678.6 570.6H685.2M678.6 585.3H685.2M678.6 600.0H685.2M678.6 614.8H685.2M678.6 629.5H685.2M678.6 644.2H685.2M678.6 658.9H685.2M678.6 673.6H685.2M685.2 673.6V680.0M706.5 673.6V677.8M727.8 673.6V677.8M749.1 673.6V677.8M770.4 673.6V680.0M791.7 673.6V677.8M813.0 673.6V677.8M834.3 673.6V677.8M855.6 673.6V680.0M876.9 673.6V677.8M898.2 673.6V677.8M919.5 673.6V677.8" stroke="#3c3c3c" stroke-width="1.3" fill="none"/>
<text x="671.2" y="589.8" font-size="12.5" fill="#3a3a3a" text-anchor="end">0.75</text>
<text x="671.2" y="619.2" font-size="12.5" fill="#3a3a3a" text-anchor="end">0.5</text>
<text x="671.2" y="648.7" font-size="12.5" fill="#3a3a3a" text-anchor="end">0.25</text>
<text x="671.2" y="678.1" font-size="12.5" fill="#3a3a3a" text-anchor="end">0.0</text>
<text x="667.2" y="569.1" font-size="12.5" fill="#3a3a3a" text-anchor="end">x10</text>
<text x="668.2" y="560.1" font-size="11.5" fill="#3a3a3a" text-anchor="start">3</text>
<text x="630.8" y="608.0" font-size="13" fill="#3a3a3a" text-anchor="middle" transform="rotate(-90 630.8 608.0)">Intensity</text>
<text x="683.0" y="697.1" font-size="12.5" fill="#3a3a3a" text-anchor="middle" letter-spacing="-0.3">0</text>
<text x="768.2" y="697.1" font-size="12.5" fill="#3a3a3a" text-anchor="middle" letter-spacing="-0.3">50</text>
<text x="853.4" y="697.1" font-size="12.5" fill="#3a3a3a" text-anchor="middle" letter-spacing="-0.3">100</text>
<text x="923.4" y="697.1" font-size="13" fill="#3a3a3a" text-anchor="middle" letter-spacing="0.4">m/z</text>
<text x="811.7" y="714.8" font-size="12.5" fill="#444" text-anchor="middle" letter-spacing="-0.14">(5) ESI-TOF 30.0eV-neV POSITIVE MS2...</text>
<path d="M815.7 673.6V656.7M864.4 673.6V650.6" stroke="#6e6e6e" stroke-width="2" fill="none"/>
<path d="M758.9 673.6V669.8M771.4 673.6V670.2M774.6 673.6V666.2M777.5 673.6V668.4M779.1 673.6V672.2M791.2 673.6V672.2M795.7 673.6V671.3M798.0 673.6V670.2M799.8 673.6V672.0M818.6 673.6V555.9M820.7 673.6V665.0M822.0 673.6V671.8M836.1 673.6V661.9M843.8 673.6V672.2M846.3 673.6V662.8M847.9 673.6V672.2M866.9 673.6V612.0M869.7 673.6V672.2M893.7 673.6V666.2M895.5 673.6V672.5M913.0 673.6V660.1M914.3 673.6V670.0M917.7 673.6V672.7" stroke="#2e2e2e" stroke-width="1.15" fill="none"/>
<path d="M868.1 673.6V668.0M883.5 673.6V671.8" stroke="#1e1e1e" stroke-width="2" fill="none"/>
<text x="779.9" y="617.6" font-size="14.2" fill="#3a8cc9" text-anchor="end" transform="rotate(-90 779.9 617.6)">53.039</text>
<text x="804.7" y="622.1" font-size="14.2" fill="#3a8cc9" text-anchor="end" transform="rotate(-90 804.7 622.1)">67.054</text>
<text x="837.6" y="555.7" font-size="14.2" fill="#3a8cc9" text-anchor="end" transform="rotate(-90 837.6 555.7)">79.054</text>
<text x="842.1" y="614.1" font-size="14.2" fill="#3a8cc9" text-anchor="end" transform="rotate(-90 842.1 614.1)">89.039</text>
<text x="873.4" y="556.4" font-size="14.2" fill="#3a8cc9" text-anchor="end" transform="rotate(-90 873.4 556.4)">107.049</text>
<text x="887.7" y="616.1" font-size="14.2" fill="#3a8cc9" text-anchor="end" transform="rotate(-90 887.7 616.1)">116.049</text>
<text x="919.2" y="603.6" font-size="14.2" fill="#3a8cc9" text-anchor="end" transform="rotate(-90 919.2 603.6)">134.060</text>
<path d="M616.1 717.4l3.3 -4.3l3.3 4.3zM616.1 718.6l3.3 4.3l3.3 -4.3z" fill="#3a3a3a"/>
<path d="M635.3 714.7l-4.3 3.3l4.3 3.3zM636.5 714.7l4.3 3.3l-4.3 3.3z" fill="#3a3a3a"/></g>
<g><rect x="1018.6" y="544.5" width="254.8" height="129.1" fill="#fff" stroke="#3c3c3c" stroke-width="1.4"/>
<path d="M1012.0 555.9H1018.6M1012.0 570.6H1018.6M1012.0 585.3H1018.6M1012.0 600.0H1018.6M1012.0 614.8H1018.6M1012.0 629.5H1018.6M1012.0 644.2H1018.6M1012.0 658.9H1018.6M1012.0 673.6H1018.6M1018.6 673.6V680.0M1042.1 673.6V677.8M1065.5 673.6V677.8M1089.0 673.6V677.8M1112.5 673.6V680.0M1136.0 673.6V677.8M1159.5 673.6V677.8M1182.9 673.6V677.8M1206.4 673.6V680.0M1229.9 673.6V677.8M1253.3 673.6V677.8" stroke="#3c3c3c" stroke-width="1.3" fill="none"/>
<text x="1004.6" y="589.8" font-size="12.5" fill="#3a3a3a" text-anchor="end">0.75</text>
<text x="1004.6" y="619.2" font-size="12.5" fill="#3a3a3a" text-anchor="end">0.5</text>
<text x="1004.6" y="648.7" font-size="12.5" fill="#3a3a3a" text-anchor="end">0.25</text>
<text x="1004.6" y="678.1" font-size="12.5" fill="#3a3a3a" text-anchor="end">0.0</text>
<text x="1000.6" y="569.1" font-size="12.5" fill="#3a3a3a" text-anchor="end">x10</text>
<text x="1001.6" y="560.1" font-size="11.5" fill="#3a3a3a" text-anchor="start">3</text>
<text x="966.4" y="608.0" font-size="13" fill="#3a3a3a" text-anchor="middle" transform="rotate(-90 966.4 608.0)">Intensity</text>
<text x="1016.4" y="697.1" font-size="12.5" fill="#3a3a3a" text-anchor="middle" letter-spacing="-0.3">0</text>
<text x="1110.3" y="697.1" font-size="12.5" fill="#3a3a3a" text-anchor="middle" letter-spacing="-0.3">50</text>
<text x="1204.2" y="697.1" font-size="12.5" fill="#3a3a3a" text-anchor="middle" letter-spacing="-0.3">100</text>
<text x="1256.8" y="697.1" font-size="13" fill="#3a3a3a" text-anchor="middle" letter-spacing="0.4">m/z</text>
<text x="1145.1" y="714.8" font-size="12.5" fill="#444" text-anchor="middle" letter-spacing="-0.09">(6) ESI-TOF 40.0eV-neV POSITIVE MS2...</text>
<path d="M1095.5 673.6V672.2M1099.6 673.6V671.3M1110.7 673.6V670.7M1113.0 673.6V652.2M1116.4 673.6V648.8M1120.5 673.6V661.2M1122.1 673.6V672.2M1135.9 673.6V662.8M1139.3 673.6V672.2M1143.2 673.6V665.3M1144.8 673.6V672.5M1161.6 673.6V626.2M1163.1 673.6V671.8M1165.9 673.6V555.9M1169.3 673.6V671.3M1184.0 673.6V648.8M1187.4 673.6V672.0M1195.8 673.6V647.7M1199.2 673.6V672.2M1216.0 673.6V665.0M1217.6 673.6V672.2M1248.0 673.6V667.3M1249.8 673.6V672.5" stroke="#2e2e2e" stroke-width="1.15" fill="none"/>
<path d="M1114.8 673.6V668.0M1117.8 673.6V671.3M1167.7 673.6V665.7M1223.3 673.6V671.6" stroke="#1e1e1e" stroke-width="2" fill="none"/>
<text x="1101.8" y="624.4" font-size="14.2" fill="#3a8cc9" text-anchor="end" transform="rotate(-90 1101.8 624.4)">42.034</text>
<text x="1122.6" y="600.6" font-size="14.2" fill="#3a8cc9" text-anchor="end" transform="rotate(-90 1122.6 600.6)">53.039</text>
<text x="1150.1" y="617.0" font-size="14.2" fill="#3a8cc9" text-anchor="end" transform="rotate(-90 1150.1 617.0)">67.042</text>
<text x="1185.0" y="556.4" font-size="14.2" fill="#3a8cc9" text-anchor="end" transform="rotate(-90 1185.0 556.4)">79.054</text>
<text x="1190.7" y="601.1" font-size="14.2" fill="#3a8cc9" text-anchor="end" transform="rotate(-90 1190.7 601.1)">89.039</text>
<text x="1222.0" y="609.1" font-size="14.2" fill="#3a8cc9" text-anchor="end" transform="rotate(-90 1222.0 609.1)">106.065</text>
<text x="1253.8" y="610.8" font-size="14.2" fill="#3a8cc9" text-anchor="end" transform="rotate(-90 1253.8 610.8)">123.044</text>
<path d="M949.5 717.4l3.3 -4.3l3.3 4.3zM949.5 718.6l3.3 4.3l3.3 -4.3z" fill="#3a3a3a"/>
<path d="M968.7 714.7l-4.3 3.3l4.3 3.3zM969.9 714.7l4.3 3.3l-4.3 3.3z" fill="#3a3a3a"/></g>
</svg>
</body></html>
